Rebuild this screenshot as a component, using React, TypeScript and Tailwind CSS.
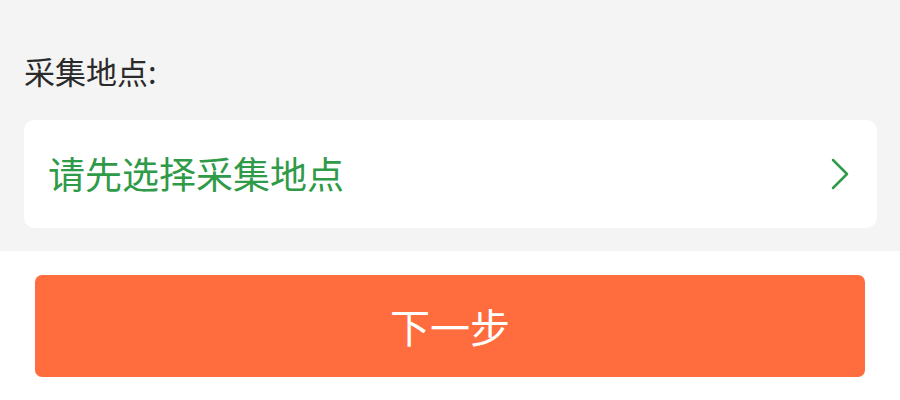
export default function App() {
  return (
    <div
      className="w-[900px] h-[400px] bg-white overflow-hidden"
      style={{ fontFamily: '"Noto Sans CJK SC", "Noto Sans", sans-serif' }}
    >
      <div className="bg-[#f4f4f4] h-[251px] px-6 pt-[51px]">
        <div className="text-[31px] leading-[40px] text-[#2a2a2a]">采集地点:</div>
        <button className="mt-[29px] w-[853px] h-[108px] bg-white rounded-[10px] flex items-center justify-between pl-6 pr-7">
          <span className="text-[37px] text-[#2f9a47]">请先选择采集地点</span>
          <svg width="18" height="32" viewBox="0 0 18 32" fill="none">
            <path d="M2 2l14 14L2 30" stroke="#2f9a47" strokeWidth="2.5" strokeLinecap="round" strokeLinejoin="round" />
          </svg>
        </button>
      </div>
      <div className="pt-6 px-[35px]">
        <button className="w-[830px] h-[102px] bg-[#ff6d3f] rounded-[7px] text-white text-[40px] flex items-center justify-center">
          下一步
        </button>
      </div>
    </div>
  )
}
